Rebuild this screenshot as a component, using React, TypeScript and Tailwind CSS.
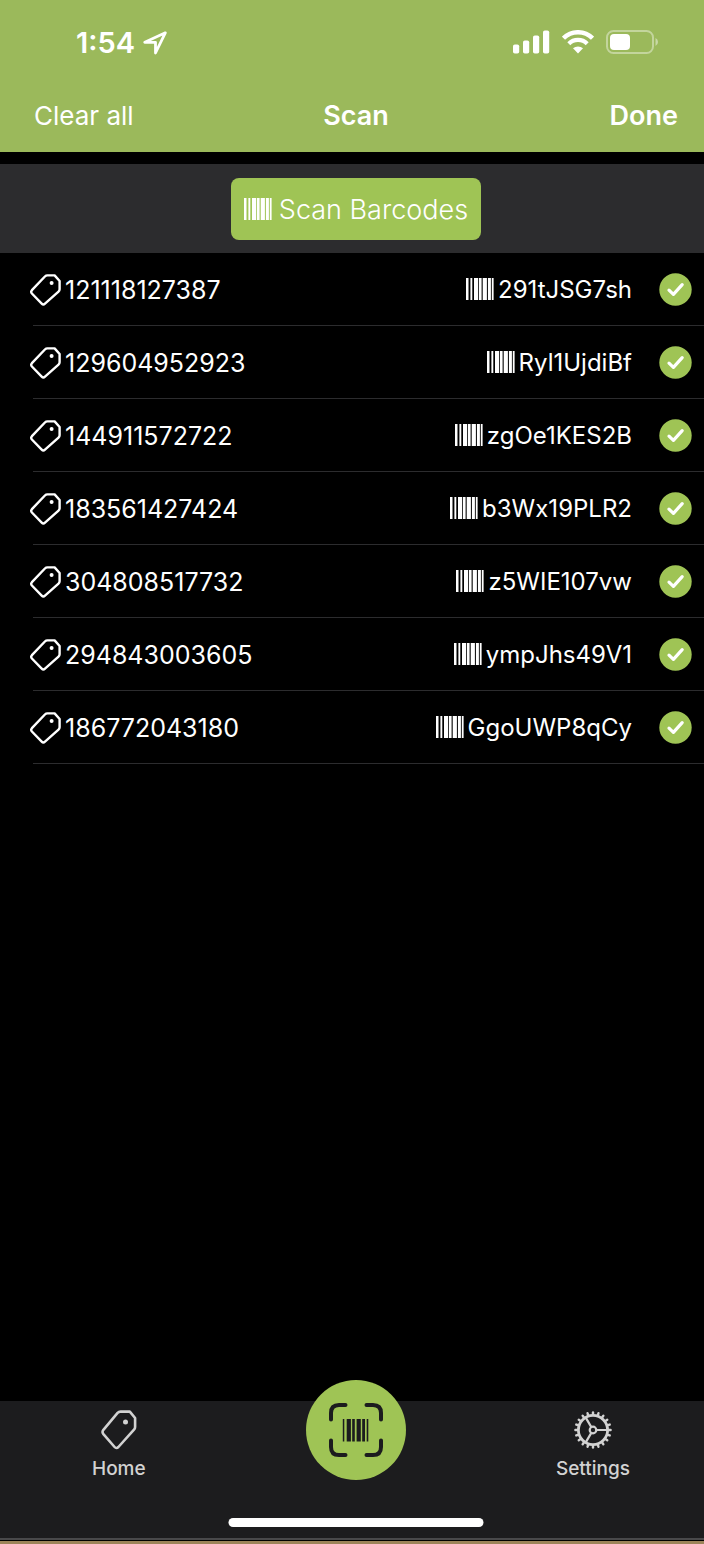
type Item = {
    tag: string;
    code: string;
};

const items: Item[] = [
    { tag: "121118127387", code: "291tJSG7sh" },
    { tag: "129604952923", code: "Ryl1UjdiBf" },
    { tag: "144911572722", code: "zgOe1KES2B" },
    { tag: "183561427424", code: "b3Wx19PLR2" },
    { tag: "304808517732", code: "z5WIE107vw" },
    { tag: "294843003605", code: "ympJhs49V1" },
    { tag: "186772043180", code: "GgoUWP8qCy" },
];

const TagIcon = () => (
    <svg width="32" height="32" viewBox="0 0 32 32" fill="none" className="shrink-0">
        <path
            d="M17.4 1.4H24.6L29.6 7V15.2Q29.6 16.6 28.5 17.6L15 29.6Q13.3 31.2 11.7 29.6L1.9 19.5Q0.5 17.8 1.9 16.2L14.9 2.5Q16 1.4 17.4 1.4Z"
            stroke="currentColor"
            strokeWidth="2.4"
            strokeLinejoin="round"
        />
        <circle cx="21.6" cy="9" r="2" fill="currentColor" />
    </svg>
);

const HomeIcon = () => (
    <svg width="36" height="40" viewBox="0 0 36 40" fill="none">
        <path
            d="M19.5 1.6H28.8L34.1 8V17Q34.1 18.5 33 19.7L17.4 37Q15.4 39 13.6 37L2.2 23.8Q0.8 21.8 2.4 19.8L16.6 2.9Q17.8 1.6 19.5 1.6Z"
            stroke="currentColor"
            strokeWidth="2.6"
            strokeLinejoin="round"
        />
        <circle cx="24.5" cy="12" r="2.5" fill="currentColor" />
    </svg>
);

const BarcodeIcon = () => (
    <svg width="28" height="22" viewBox="0 0 28 22" fill="currentColor">
        <path d="M0 0h2.5v22H0zM4.4 0h1.9v22H4.400zM8 0h4.200v22H8zM13 0h2.600v22H13zM16.700 0h4.200v22h-4.200zM21.900 0h3v22h-3zM25.800 0h1.800v22h-1.800z" />
    </svg>
);

const CheckIcon = () => (
    <svg width="33" height="33" viewBox="0 0 33 33" fill="none" className="shrink-0">
        <circle cx="16.5" cy="16.5" r="16.2" fill="#9fc455" />
        <path
            d="M10 17.2L14.4 21.4L23.2 11.6"
            stroke="white"
            strokeWidth="3.2"
            strokeLinecap="round"
            strokeLinejoin="round"
        />
    </svg>
);

const teeth = Array.from({ length: 20 }, (_, i) => i * 18);

const GearIcon = () => (
    <svg width="38" height="40" viewBox="-19 -20 38 40" fill="none" stroke="currentColor">
        <circle r="14.6" strokeWidth="2.8" />
        <circle r="3.3" strokeWidth="2.2" />
        <path d="M3.3 0H14M-1.7 -2.9L-7.4 -12.6M-1.7 2.9L-7.4 12.6" strokeWidth="2.2" />
        {teeth.map((deg) => (
            <path
                key={deg}
                d="M15.5 0H17.6"
                strokeWidth="2.4"
                strokeLinecap="round"
                transform={`rotate(${deg})`}
            />
        ))}
    </svg>
);

const ScanIcon = () => (
    <svg width="54" height="54" viewBox="0 0 54 54" fill="none">
        <path
            d="M2 16.5V10Q2 2 10 2H16.5M37.5 2H44Q52 2 52 10V16.5M52 37.5V44Q52 52 44 52H37.5M16.5 52H10Q2 52 2 44V37.5"
            stroke="#1c1c1e"
            strokeWidth="4"
            strokeLinecap="round"
        />
        <path
            d="M13.8 16h1.5v22.5h-1.5zM17.7 16h4.2v22.5h-4.2zM23.200 16h2.600v22.500h-2.600zM27.600 16h4.200v22.500h-4.200zM33.200 16h2.800v22.500h-2.800zM37.700 16h1.600v22.500h-1.600z"
            fill="#1c1c1e"
        />
    </svg>
);

const StatusBar = () => (
    <div className="flex h-[84px] items-center justify-between pr-[46px] pl-[76px]">
        <div className="flex items-center gap-2 pt-px text-[29px] leading-8 font-semibold">
            <span>1:54</span>
            <svg width="24" height="24" viewBox="0 0 24 24" fill="none">
                <path
                    d="M22.3 1.8L1.8 11.3H12.5V22Z"
                    stroke="white"
                    strokeWidth="2.8"
                    strokeLinejoin="round"
                />
            </svg>
        </div>
        <div className="flex items-center gap-3">
            <svg width="37" height="24" viewBox="0 0 37 24" fill="white">
                <rect x="0" y="14.5" width="6.2" height="9" rx="1.8" />
                <rect x="10" y="10.5" width="6.2" height="13" rx="1.8" />
                <rect x="20" y="5.5" width="6.2" height="18" rx="1.8" />
                <rect x="30" y="0.5" width="6.2" height="23" rx="1.8" />
            </svg>
            <svg width="32" height="24" viewBox="0 0 32 24" fill="none" stroke="white">
                <path d="M1.5 8.2A20.5 20.5 0 0 1 30.5 8.2" strokeWidth="4.4" />
                <path d="M6.8 13.7A13 13 0 0 1 25.2 13.7" strokeWidth="4.2" />
                <path d="M16 23.5L11 18.3A7.5 7.5 0 0 1 21 18.3Z" fill="white" stroke="none" />
            </svg>
            <svg width="52" height="24" viewBox="0 0 52 24" fill="none">
                <rect x="1" y="1" width="46" height="22" rx="6.5" stroke="white" strokeOpacity="0.4" strokeWidth="2" />
                <rect x="4" y="4" width="20" height="16" rx="4" fill="white" />
                <path d="M49.5 8v8Q52 14.8 52 12T49.5 8Z" fill="white" fillOpacity="0.45" />
            </svg>
        </div>
    </div>
);

const App = () => {
    return (
        <div className="flex min-h-screen flex-col bg-black font-['Inter','Liberation_Sans',sans-serif] text-white">
            {/* HEADER */}
            <header className="h-[152px] bg-[#9bb95b]">
                <StatusBar />
                <div className="grid grid-cols-3 items-center pr-[26px] pl-[34px] text-[27px] leading-[64px]">
                    <button type="button" className="justify-self-start text-[26px] font-normal">
                        Clear all
                    </button>
                    <h1 className="justify-self-center font-semibold">Scan</h1>
                    <button type="button" className="justify-self-end font-semibold">
                        Done
                    </button>
                </div>
            </header>

            {/* SCAN BUTTON */}
            <div className="mt-3 flex h-[89px] items-center justify-center bg-[#2c2c2e] pl-2">
                <button
                    type="button"
                    className="flex h-[62px] items-center gap-[7px] rounded-lg bg-[#9fc455] px-[13px] text-[27px] font-light"
                >
                    <BarcodeIcon />
                    <span className="pt-[3px]">Scan Barcodes</span>
                </button>
            </div>

            {/* LIST */}
            <ul className="flex-1">
                {items.map((item) => (
                    <li key={item.tag} className="relative flex h-[73px] items-center pr-3 pl-[30px]">
                        <TagIcon />
                        <span className="ml-[3px] pt-[2px] text-[25px]">{item.tag}</span>
                        <span className="ml-auto flex items-center gap-1 text-[24px]">
                            <span className="pb-[2px]">
                                <BarcodeIcon />
                            </span>
                            <span className="pt-px">{item.code}</span>
                        </span>
                        <span className="ml-[27px]">
                            <CheckIcon />
                        </span>
                        <span className="absolute right-0 bottom-0 left-[33px] h-px bg-[#2c2c2e]" />
                    </li>
                ))}
            </ul>

            {/* TAB BAR */}
            <nav className="relative h-[137px] bg-[#1c1c1e] text-[#d2d2d2]">
                <div className="flex justify-between pt-[9px] pr-[74px] pl-[92px] text-[19px] leading-6 font-medium">
                    <a href="#home" className="flex flex-col items-center gap-[7px]">
                        <HomeIcon />
                        Home
                    </a>
                    <a href="#settings" className="flex flex-col items-center gap-[7px]">
                        <GearIcon />
                        Settings
                    </a>
                </div>
                <button
                    type="button"
                    aria-label="Scan"
                    className="absolute -top-[21px] left-1/2 ml-1 flex size-[100px] -translate-x-1/2 items-center justify-center rounded-full bg-[#9fc455]"
                >
                    <ScanIcon />
                </button>
                <div className="absolute bottom-[11px] left-1/2 ml-1 h-[9px] w-[255px] -translate-x-1/2 rounded-full bg-white" />
            </nav>
            <div className="h-[6px] border-t-2 border-b-3 border-t-[#48484a] border-b-[#9d8459]" />
        </div>
    );
};

export default App;
